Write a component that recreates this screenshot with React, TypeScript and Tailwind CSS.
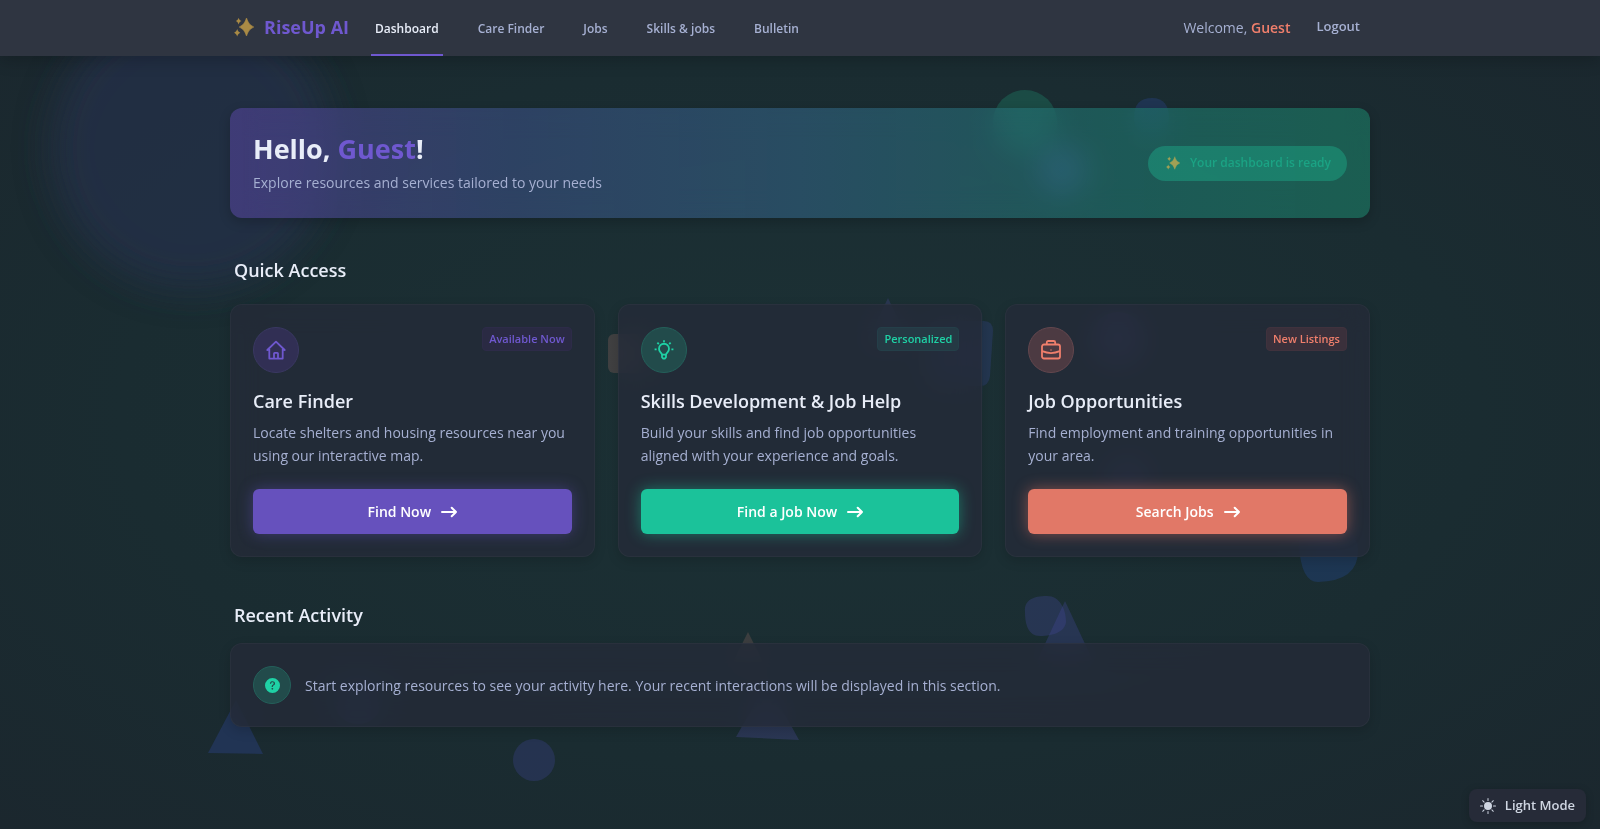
import type { ReactNode } from "react";
import { BsBrightnessHighFill, BsQuestionCircleFill } from "react-icons/bs";
import { clsx } from "clsx";

type Tone = "violet" | "green" | "coral";

interface AccessCard {
  title: string;
  text: string;
  badge: string;
  action: string;
  tone: Tone;
  icon: ReactNode;
}

const links = ["Dashboard", "Care Finder", "Jobs", "Skills & jobs", "Bulletin"];

const tones = {
  violet: {
    icon: "border-[#3a3862] bg-[#312f54] text-[#6f58cf]",
    badge: "border-[#2d2b48] bg-[#2a2a43] text-[#6f58cf]",
    button: "bg-[#6651bd] shadow-[0_0_15px_rgba(111,88,207,0.4)]",
  },
  green: {
    icon: "border-[#24605a] bg-[#224b4b] text-[#1fd1a5]",
    badge: "border-[#243f49] bg-[#253944] text-[#1fd1a5]",
    button: "bg-[#1bc29a] shadow-[0_0_15px_rgba(29,209,161,0.45)]",
  },
  coral: {
    icon: "border-[#64474e] bg-[#4c3a42] text-[#f07f6c]",
    badge: "border-[#40323d] bg-[#3a303b] text-[#f07f6c]",
    button: "bg-[#e17867] shadow-[0_0_15px_rgba(255,127,107,0.45)]",
  },
};

function Sparkles({ className }: { className?: string }) {
  return (
    <svg viewBox="0 0 20 20" className={className} fill="currentColor" aria-hidden="true">
      <path d="M12.500 1c1.600 4.600 3 6.800 7.300 9-4.300 2.200-5.700 4.400-7.300 9-1.600-4.600-3-6.800-7.300-9 4.300-2.200 5.700-4.400 7.300-9z" stroke="currentColor" strokeWidth="0.600" strokeLinejoin="round" />
      <path d="M4.600.8c.6 1.800 1.200 2.500 2.900 3.300-1.700.8-2.300 1.500-2.900 3.300-.6-1.800-1.200-2.500-2.900-3.300 1.700-.8 2.300-1.500 2.900-3.300z" />
      <path d="M3.200 12c.6 2 1.300 2.800 3.100 3.700-1.800.9-2.500 1.700-3.100 3.700-.6-2-1.300-2.800-3.100-3.700 1.800-.9 2.500-1.700 3.100-3.700z" />
    </svg>
  );
}

function HouseIcon() {
  return (
    <svg viewBox="0 0 20 20" className="h-5 w-5" fill="none" stroke="currentColor" strokeWidth="1.800" strokeLinecap="round" strokeLinejoin="round" aria-hidden="true">
      <path d="M1.300 10 10 1.600 18.700 10M3.300 8.200v10.400h13.400V8.200M8 18.500v-5c0-.4.300-.7.700-.7h2.600c.4 0 .7.300.7.700v5" />
    </svg>
  );
}

function BulbIcon() {
  return (
    <svg viewBox="0 0 20 20" className="h-5 w-5" fill="none" stroke="currentColor" strokeWidth="1.800" strokeLinejoin="round" aria-hidden="true">
      <path d="M8 14.900c0-1.300-.7-1.700-1.500-2.600a5 5 0 1 1 7 0c-.8.9-1.500 1.300-1.500 2.600M8 14.700h4v2.500l-1.200 1.400H9.200L8 17.200z" />
      <path d="M10 .3v2M.6 9.300h2M17.400 9.300h2M3.400 2.700l1.400 1.500M16.600 2.700l-1.400 1.500" />
    </svg>
  );
}

function BriefcaseIcon() {
  return (
    <svg viewBox="0 0 20 20" className="h-5 w-5" fill="none" stroke="currentColor" strokeWidth="1.800" strokeLinejoin="round" aria-hidden="true">
      <rect x="1" y="4.500" width="18" height="14" rx="2" />
      <path d="M5.800 4.300V2.500c0-.9.600-1.500 1.500-1.500h5.400c.9 0 1.500.6 1.500 1.500v1.800M1.200 11.200c5.700 2.400 11.900 2.400 17.600 0" />
      <circle cx="10" cy="10" r="0.700" fill="currentColor" stroke="none" />
    </svg>
  );
}

function ArrowIcon() {
  return (
    <svg viewBox="0 0 16 12" className="h-3 w-4" fill="none" stroke="currentColor" strokeWidth="2" strokeLinecap="round" strokeLinejoin="round" aria-hidden="true">
      <path d="M1 6h14M10.700 1.700 15 6l-4.300 4.300" />
    </svg>
  );
}

const cards: AccessCard[] = [
  {
    title: "Care Finder",
    text: "Locate shelters and housing resources near you using our interactive map.",
    badge: "Available Now",
    action: "Find Now",
    tone: "violet",
    icon: <HouseIcon />,
  },
  {
    title: "Skills Development & Job Help",
    text: "Build your skills and find job opportunities aligned with your experience and goals.",
    badge: "Personalized",
    action: "Find a Job Now",
    tone: "green",
    icon: <BulbIcon />,
  },
  {
    title: "Job Opportunities",
    text: "Find employment and training opportunities in your area.",
    badge: "New Listings",
    action: "Search Jobs",
    tone: "coral",
    icon: <BriefcaseIcon />,
  },
];

function Backdrop() {
  return (
    <svg className="pointer-events-none fixed inset-0 h-full w-full" aria-hidden="true">
      <defs>
        <filter id="soft" x="-50%" y="-50%" width="200%" height="200%">
          <feGaussianBlur stdDeviation="18" />
        </filter>
      </defs>
      <circle cx="192" cy="148" r="142" fill="#27334e" opacity="0.65" filter="url(#soft)" />
      <circle cx="1025" cy="122" r="32" fill="#1d9474" opacity="0.3" />
      <circle cx="1062" cy="170" r="24" fill="#4a54a4" opacity="0.45" />
      <path d="M1134 118c0-14 6-20 18-20s17 8 17 20-7 19-17 19-18-7-18-19z" fill="#2c4490" opacity="0.35" />
      <path d="m888 298 22 46h-44z" fill="#4b4a96" opacity="0.3" />
      <rect x="608" y="334" width="40" height="39" rx="6" fill="#a07068" opacity="0.28" />
      <path d="M938 321h46q9 0 9 10l-3 45q-1 10-10 10h-42q-10 0-10-10v-45q0-10 10-10z" fill="#344488" opacity="0.34" />
      <circle cx="1118" cy="338" r="26" fill="#4b4a96" opacity="0.45" />
      <circle cx="1128" cy="480" r="22" fill="#4b4a96" opacity="0.35" />
      <path d="M1299 545q0-20 28-20 31 0 31 26 0 30-40 31-17 0-19-37z" fill="#24488c" opacity="0.36" />
      <path d="M1025 612c-1-12 8-16 22-16 13 0 19 14 19 25 0 10-12 15-26 15-12 0-15-12-15-24z" fill="#4448a0" opacity="0.3" />
      <path d="m1065 601 28 60h-56z" fill="#4448a0" opacity="0.3" />
      <path d="m748 632 15 30h-30z" fill="#a07068" opacity="0.25" />
      <path d="m767 682 32 58-63-3z" fill="#4b4a96" opacity="0.35" />
      <path d="m236 700 27 54-55-1z" fill="#2c4490" opacity="0.38" />
      <circle cx="534" cy="760" r="21" fill="#4448a0" opacity="0.28" />
      <circle cx="358" cy="700" r="24" fill="#344488" opacity="0.35" />
    </svg>
  );
}

export default function App() {
  return (
    <div className="relative min-h-screen bg-[#1b272e] bg-[radial-gradient(ellipse_at_50%_50%,#1c3135_0%,#1a2c31_60%,#1b272e_100%)] font-['Open_Sans','Noto_Sans',sans-serif] text-[14px] text-[#a6b0d2]">
      <Backdrop />

      <header className="relative bg-[#2f3541] shadow-[0_4px_16px_rgba(0,0,0,0.2)]">
        <div className="mx-auto flex h-14 max-w-[1140px] items-center justify-between pr-2.5 pl-1">
          <div className="flex h-full items-center">
            <a href="#" className="mr-[22px] flex items-center gap-2.5 pb-0.5 text-[18px] font-bold text-[#6f58cf]">
              <Sparkles className="h-5 w-5 text-[#a98a45]" />
              RiseUp AI
            </a>
            <nav className="flex h-full gap-[31px] text-[12px] font-semibold">
              {links.map((link, i) => (
                <a
                  key={link}
                  href="#"
                  className={clsx(
                    "flex items-center border-b-2 px-1 pt-1",
                    i === 0
                      ? "border-[#6f58cf] text-[#e8edf8]"
                      : "border-transparent"
                  )}
                >
                  {link}
                </a>
              ))}
            </nav>
          </div>
          <div className="flex items-center gap-[26px] pb-0.5">
            <span>
              Welcome, <strong className="font-semibold text-[#f07f6c]">Guest</strong>
            </span>
            <button type="button" className="text-[13px] font-semibold">
              Logout
            </button>
          </div>
        </div>
      </header>

      <main className="relative mx-auto max-w-[1140px] pt-[52px] pb-[100px]">
        <section className="flex h-[110px] items-center justify-between rounded-xl bg-[linear-gradient(90deg,rgba(93,72,170,0.5)_0%,rgba(62,84,140,0.55)_25%,rgba(50,98,130,0.6)_50%,rgba(32,122,114,0.58)_78%,rgba(28,128,104,0.6)_100%)] px-[23px] shadow-[0_4px_12px_rgba(0,0,0,0.2)] backdrop-blur-[14px]">
          <div>
            <h1 className="text-[27px] leading-9 font-bold text-[#e8edf8]">
              Hello, <span className="text-[#6f58cf]">Guest</span>!
            </h1>
            <p className="mt-1 leading-6">
              Explore resources and services tailored to your needs
            </p>
          </div>
          <div className="flex h-[35px] items-center gap-2.5 rounded-full bg-[#1dd1a1]/30 px-4 pl-[18px] text-[12px] font-semibold text-[#1ba384]">
            <Sparkles className="h-3.5 w-3.5 text-[#a0a055]" />
            Your dashboard is ready
          </div>
        </section>

        <h2 className="mt-[38px] pl-1 text-[18px] leading-7 font-semibold text-[#e8edf8]">
          Quick Access
        </h2>
        <div className="mt-5 grid grid-cols-3 gap-[23px]">
          {cards.map((card) => (
            <article
              key={card.title}
              className="flex flex-col rounded-xl border border-white/3 bg-[#242b38]/80 p-[22px] shadow-[0_4px_12px_rgba(0,0,0,0.15)] backdrop-blur-[14px]"
            >
              <div className="flex items-start justify-between">
                <div className={clsx("grid h-[46px] w-[46px] place-items-center rounded-full border", tones[card.tone].icon)}>
                  {card.icon}
                </div>
                <span className={clsx("rounded border px-1.5 text-[11px] leading-[22px] font-semibold", tones[card.tone].badge)}>
                  {card.badge}
                </span>
              </div>
              <h3 className="mt-[14px] text-[18px] leading-7 font-semibold text-[#e8edf8]">
                {card.title}
              </h3>
              <p className="mt-1.5 leading-[23px]">{card.text}</p>
              <button
                type="button"
                className={clsx(
                  "mt-[22px] flex h-[45px] items-center justify-center gap-2.5 rounded-md text-[14px] font-semibold text-white",
                  tones[card.tone].button
                )}
              >
                {card.action}
                <ArrowIcon />
              </button>
            </article>
          ))}
        </div>

        <h2 className="mt-11 pl-1 text-[18px] leading-7 font-semibold text-[#e8edf8]">
          Recent Activity
        </h2>
        <section className="mt-[14px] flex h-[84px] items-center gap-[14px] rounded-xl border border-white/3 bg-[#242b38]/80 px-[22px] shadow-[0_4px_12px_rgba(0,0,0,0.15)] backdrop-blur-[14px]">
          <div className={clsx("grid h-[38px] w-[38px] place-items-center rounded-full border", tones.green.icon)}>
            <BsQuestionCircleFill className="h-[15px] w-[15px]" />
          </div>
          <p>
            Start exploring resources to see your activity here. Your recent
            interactions will be displayed in this section.
          </p>
        </section>
      </main>

      <button
        type="button"
        className="fixed right-3.5 bottom-[7px] flex h-[33px] items-center gap-[9px] rounded-lg bg-[#262b38] px-[11px] text-[13px] font-semibold text-[#cfd6e2] shadow-[0_2px_8px_rgba(0,0,0,0.2)]"
      >
        <BsBrightnessHighFill className="h-4 w-4" />
        Light Mode
      </button>
    </div>
  );
}
